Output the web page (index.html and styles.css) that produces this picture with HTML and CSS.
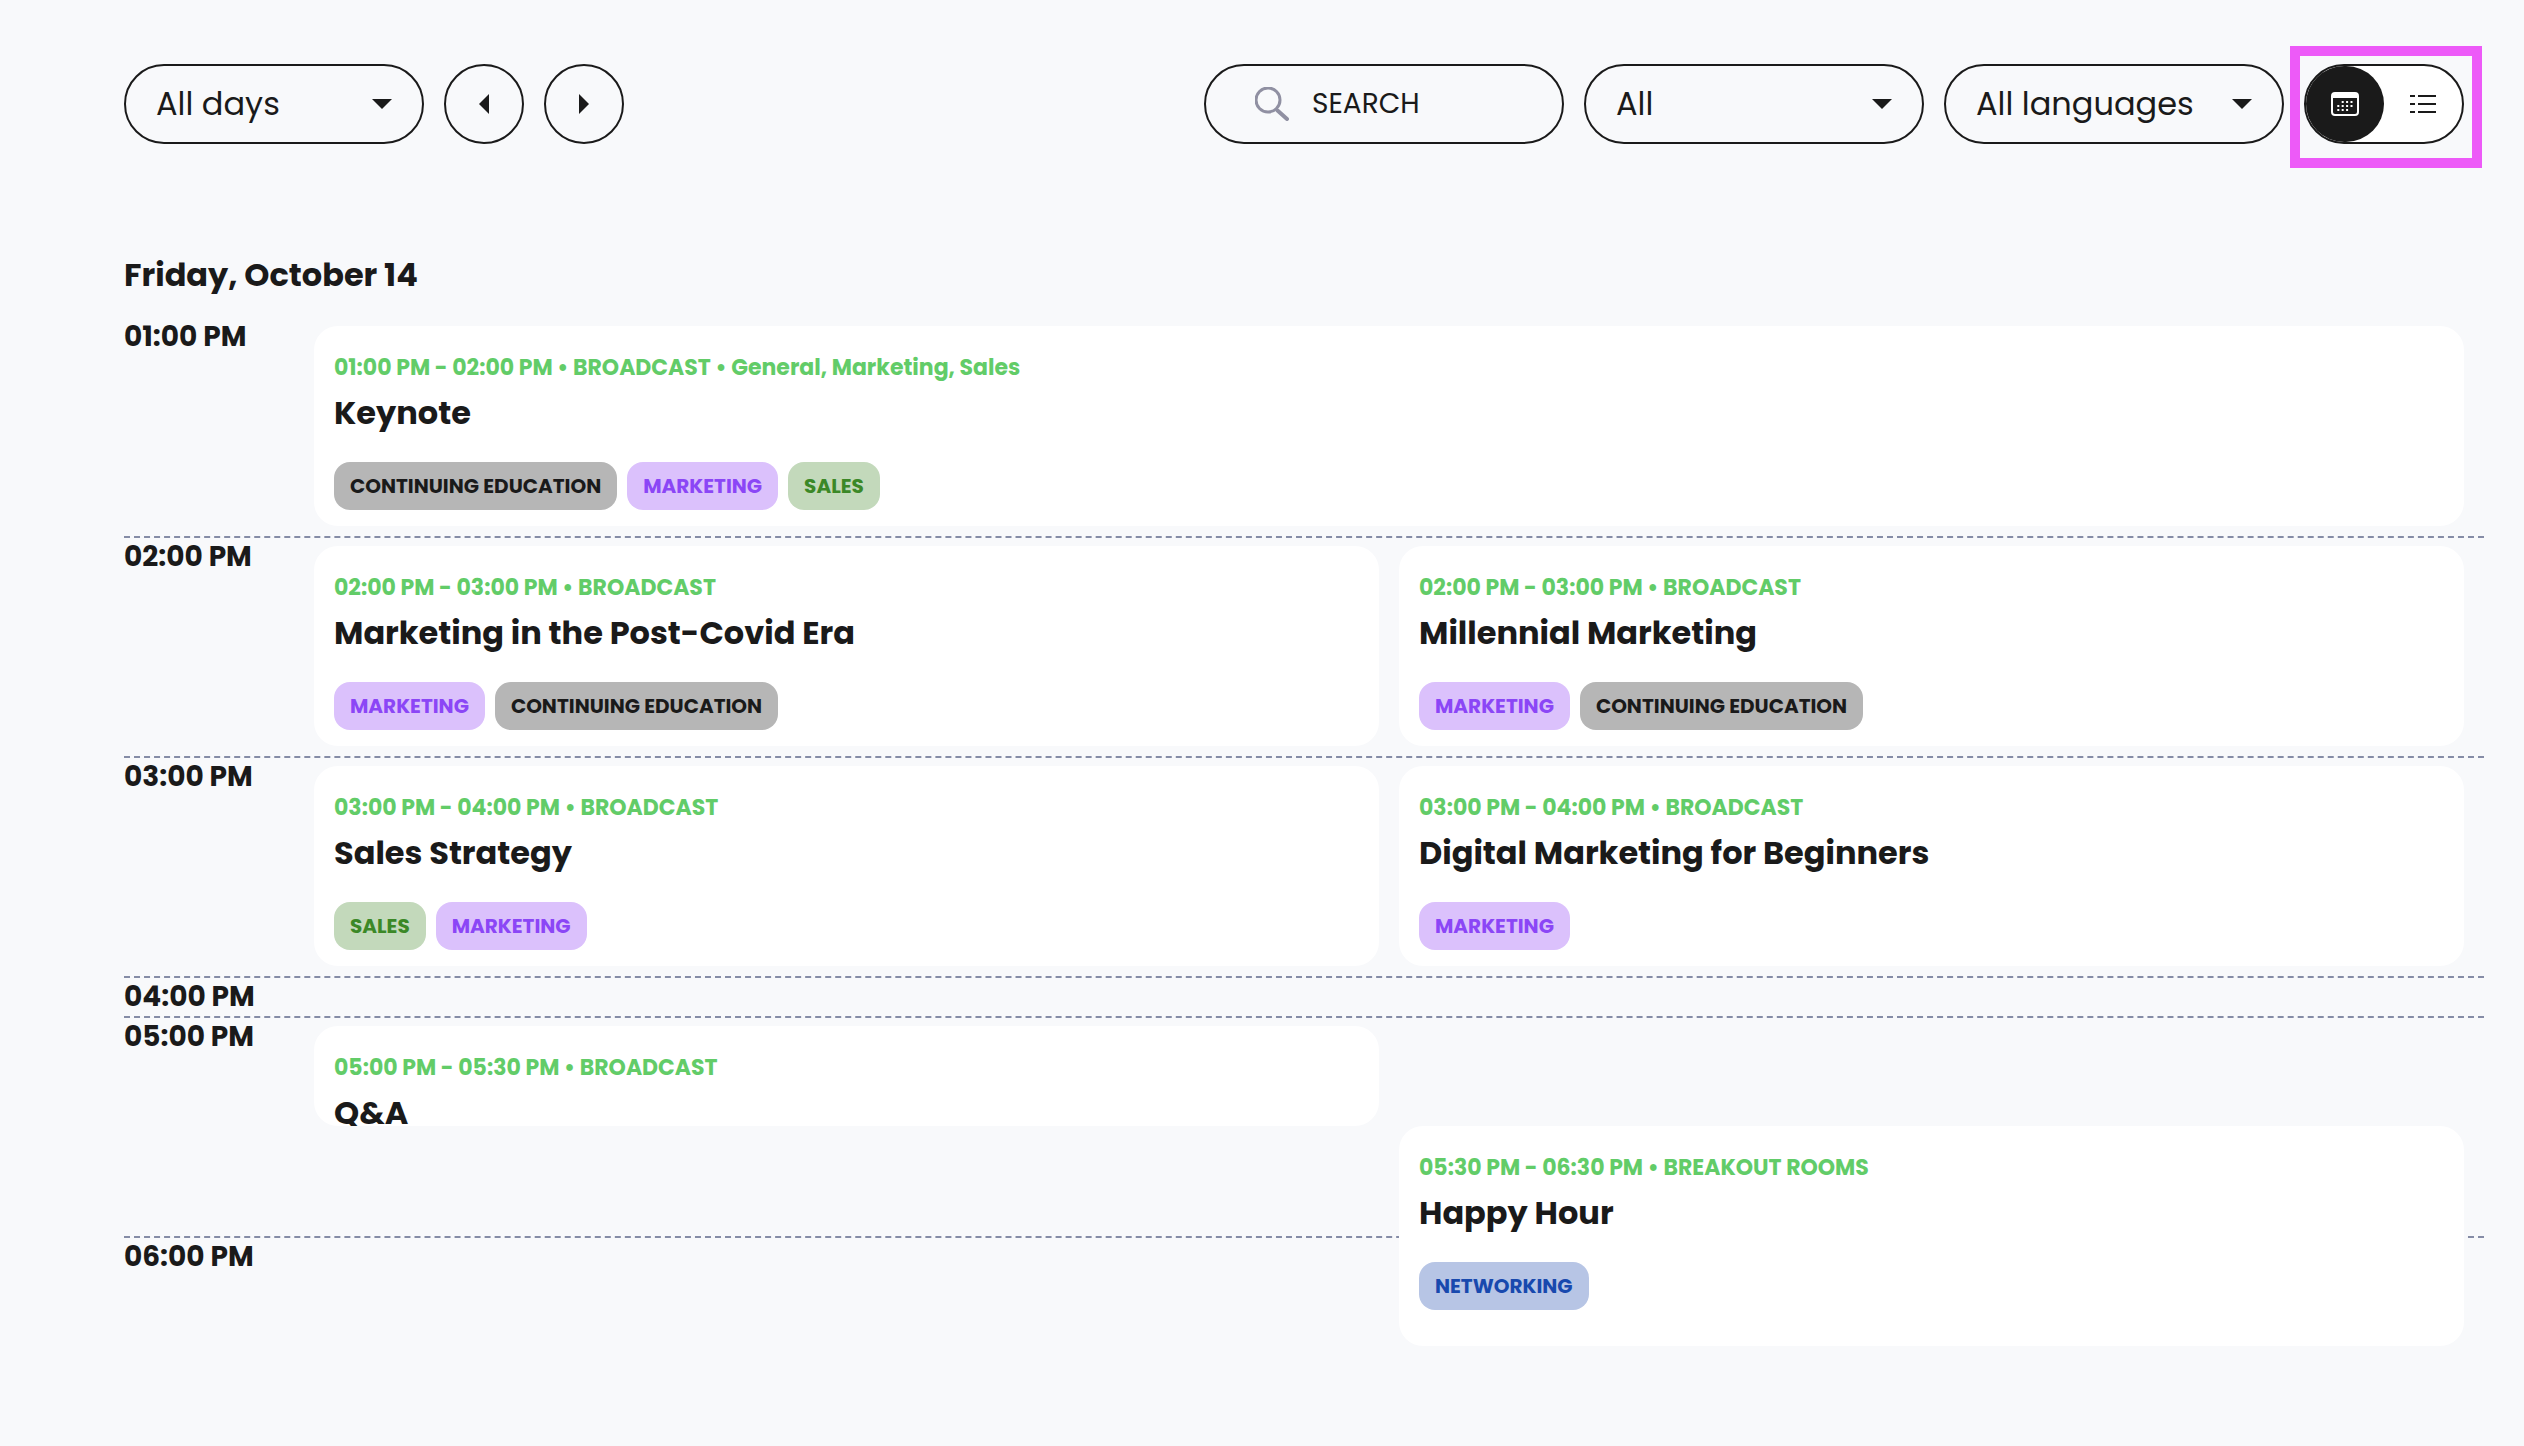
FILE: index.html
```html
<!DOCTYPE html>
<html lang="en">
<head>
    <meta charset="UTF-8">
    <meta name="viewport" content="width=device-width, initial-scale=1.0">
    <title>Agenda</title>
    <link rel="stylesheet" href="styles.css">
</head>
<body>

    <!-- Filters -->
    <header class="toolbar">
        <div class="select-box day-select">
            <select aria-label="Day">
                <option>All days</option>
                <option>Friday, October 14</option>
            </select>
            <svg class="caret" viewBox="0 0 20 10"><path d="M0 0h20L10 10z"/></svg>
        </div>
        <button class="round-btn" type="button" aria-label="Previous day">
            <svg class="arrow" viewBox="0 0 10 20"><path d="M10 0v20L0 10z"/></svg>
        </button>
        <button class="round-btn" type="button" aria-label="Next day">
            <svg class="arrow" viewBox="0 0 10 20"><path d="M0 0v20L10 10z"/></svg>
        </button>

        <div class="search-box">
            <svg class="search-icon" viewBox="0 0 34 34">
                <circle cx="13" cy="13" r="12"/>
                <path class="handle" d="M22.500 23.500L32 32"/>
            </svg>
            <input type="search" placeholder="SEARCH" aria-label="Search">
        </div>
        <div class="select-box">
            <select aria-label="Category">
                <option>All</option>
                <option>Marketing</option>
                <option>Sales</option>
            </select>
            <svg class="caret" viewBox="0 0 20 10"><path d="M0 0h20L10 10z"/></svg>
        </div>
        <div class="select-box">
            <select aria-label="Language">
                <option>All languages</option>
                <option>English</option>
            </select>
            <svg class="caret" viewBox="0 0 20 10"><path d="M0 0h20L10 10z"/></svg>
        </div>

        <!-- Calendar / list switch -->
        <div class="view-toggle">
            <button class="view-btn active" type="button" aria-label="Calendar view">
                <svg class="view-icon" viewBox="0 0 28 24">
                    <rect x="1" y="1" width="26" height="22" rx="3" fill="none" stroke="#fff" stroke-width="2"/>
                    <path d="M2 1h24v5H2z" fill="#fff"/>
                    <path d="M10.700 10h11.500M6.300 14h16M6.300 18h11.500" fill="none" stroke="#fff" stroke-width="2" stroke-dasharray="2 2.400"/>
                </svg>
            </button>
            <button class="view-btn" type="button" aria-label="List view">
                <svg class="view-icon" viewBox="0 0 28 24">
                    <path d="M1 4h5M9 4h18M1 12h5M9 12h18M1 20h5M9 20h18" fill="none" stroke="#1a1a1a" stroke-width="2"/>
                </svg>
            </button>
        </div>
    </header>

    <!-- Agenda -->
    <main>
        <h1>Friday, October 14</h1>

        <div class="schedule">
            <div class="hour h1">01:00 PM</div>
            <div class="hour h2">02:00 PM</div>
            <div class="hour h3">03:00 PM</div>
            <div class="hour h4">04:00 PM</div>
            <div class="hour h5">05:00 PM</div>
            <div class="hour h6">06:00 PM</div>

            <article class="session h1 wide">
                <p class="info">01:00 PM - 02:00 PM • BROADCAST • General, Marketing, Sales</p>
                <h2>Keynote</h2>
                <div class="tags">
                    <span class="tag education">CONTINUING EDUCATION</span>
                    <span class="tag marketing">MARKETING</span>
                    <span class="tag sales">SALES</span>
                </div>
            </article>

            <article class="session h2 left">
                <p class="info">02:00 PM - 03:00 PM • BROADCAST</p>
                <h2>Marketing in the Post-Covid Era</h2>
                <div class="tags">
                    <span class="tag marketing">MARKETING</span>
                    <span class="tag education">CONTINUING EDUCATION</span>
                </div>
            </article>

            <article class="session h2 right">
                <p class="info">02:00 PM - 03:00 PM • BROADCAST</p>
                <h2>Millennial Marketing</h2>
                <div class="tags">
                    <span class="tag marketing">MARKETING</span>
                    <span class="tag education">CONTINUING EDUCATION</span>
                </div>
            </article>

            <article class="session h3 left">
                <p class="info">03:00 PM - 04:00 PM • BROADCAST</p>
                <h2>Sales Strategy</h2>
                <div class="tags">
                    <span class="tag sales">SALES</span>
                    <span class="tag marketing">MARKETING</span>
                </div>
            </article>

            <article class="session h3 right">
                <p class="info">03:00 PM - 04:00 PM • BROADCAST</p>
                <h2>Digital Marketing for Beginners</h2>
                <div class="tags">
                    <span class="tag marketing">MARKETING</span>
                </div>
            </article>

            <article class="session first-half left">
                <p class="info">05:00 PM - 05:30 PM • BROADCAST</p>
                <h2>Q&amp;A</h2>
            </article>

            <article class="session half-past right">
                <p class="info">05:30 PM - 06:30 PM • BREAKOUT ROOMS</p>
                <h2>Happy Hour</h2>
                <div class="tags">
                    <span class="tag networking">NETWORKING</span>
                </div>
            </article>
        </div>
    </main>

</body>
</html>
```
FILE: styles.css
```css
* {
    margin: 0;
    padding: 0;
    box-sizing: border-box;
}

body {
    font-family: Poppins, Inter, "Liberation Sans", sans-serif;
    background-color: #f8f9fb;
    color: #1a1a1a;
    padding: 64px 40px 80px 124px;
}

/* Toolbar */
.toolbar {
    display: flex;
    gap: 20px;
    padding-right: 20px;
}

.select-box {
    position: relative;
    width: 340px;
    height: 80px;
}

.day-select {
    width: 300px;
}

.select-box select {
    width: 100%;
    height: 100%;
    appearance: none;
    background: transparent;
    border: 2px solid #1a1a1a;
    border-radius: 40px;
    padding: 0 60px 2px 30px;
    font-family: inherit;
    font-size: 32px;
    color: #1a1a1a;
    cursor: pointer;
}

.caret {
    position: absolute;
    right: 32px;
    top: 35px;
    width: 20px;
    height: 10px;
    fill: #1a1a1a;
    pointer-events: none;
}

.round-btn {
    display: flex;
    align-items: center;
    justify-content: center;
    width: 80px;
    height: 80px;
    background: transparent;
    border: 2px solid #1a1a1a;
    border-radius: 50%;
    cursor: pointer;
}

.arrow {
    width: 10px;
    height: 20px;
    fill: #1a1a1a;
}

.search-box {
    display: flex;
    align-items: center;
    gap: 23px;
    width: 360px;
    height: 80px;
    margin-left: auto;
    padding: 0 40px 0 49px;
    border: 2px solid #1a1a1a;
    border-radius: 40px;
}

.search-icon {
    flex: none;
    width: 34px;
    height: 34px;
    fill: none;
    stroke: #9090a2;
    stroke-width: 3;
}

.search-icon .handle {
    stroke-width: 4;
    stroke-linecap: round;
}

.search-box input {
    width: 100%;
    border: none;
    outline: none;
    background: transparent;
    font-family: inherit;
    font-size: 28px;
    color: #1a1a1a;
}

.search-box input::placeholder {
    color: #1a1a1a;
    opacity: 1;
}

/* View toggle */
.view-toggle {
    position: relative;
    display: flex;
    width: 160px;
    height: 80px;
    background-color: white;
    border: 2px solid #1a1a1a;
    border-radius: 40px;
}

/* Highlight frame round the toggle */
.view-toggle::after {
    content: "";
    position: absolute;
    inset: -20px -20px -26px -16px;
    border: 10px solid #ed5af8;
    pointer-events: none;
}

.view-btn {
    display: flex;
    flex: 1;
    align-items: center;
    justify-content: center;
    background: transparent;
    border: none;
    border-radius: 40px;
    cursor: pointer;
}

.view-btn.active {
    background-color: #1a1a1a;
}

.view-icon {
    width: 28px;
    height: 24px;
}

/* Schedule */
h1 {
    margin-top: 107px;
    font-size: 32px;
    line-height: 48px;
    font-weight: 700;
}

.schedule {
    display: grid;
    grid-template-columns: 170px 1fr 1fr 0;
    grid-template-rows: 220px 220px 220px 40px 110px 110px 110px;
    column-gap: 20px;
    margin-top: 17px;
}

.hour {
    grid-column: 1 / -1;
    border-top: 2px dashed #858ca6;
    font-size: 28px;
    line-height: 38px;
    font-weight: 700;
}

.hour.h1 {
    border-top-color: transparent;
}

.h1 { grid-row: 1; }
.h2 { grid-row: 2; }
.h3 { grid-row: 3; }
.h4 { grid-row: 4; }
.h5 { grid-row: 5 / span 2; }
.h6 { grid-row: 7; }

/* Session cards */
.session {
    margin: 10px 0;
    padding: 21px 20px 0;
    background-color: white;
    border-radius: 24px;
    overflow: hidden;
    z-index: 1;
}

.wide { grid-column: 2 / span 2; }
.left { grid-column: 2; }
.right { grid-column: 3; }

.first-half {
    grid-row: 5;
    margin-bottom: 0;
}

.half-past {
    grid-row: 6 / span 2;
    margin: 0;
}

.info {
    font-size: 22px;
    line-height: 42px;
    font-weight: 700;
    color: #62cc68;
    white-space: nowrap;
}

.session h2 {
    font-size: 32px;
    line-height: 48px;
    font-weight: 700;
    white-space: nowrap;
}

.tags {
    display: flex;
    gap: 10px;
    margin-top: 25px;
}

.tag {
    padding: 0 16px;
    border-radius: 16px;
    font-size: 20px;
    line-height: 48px;
    font-weight: 700;
    white-space: nowrap;
}

.education {
    background-color: #b6b6b6;
    color: #1a1a1a;
}

.marketing {
    background-color: #dbc1fc;
    color: #8b46f6;
}

.sales {
    background-color: #c3d9bb;
    color: #3b8827;
}

.networking {
    background-color: #b7c5e5;
    color: #1849ae;
}
```
